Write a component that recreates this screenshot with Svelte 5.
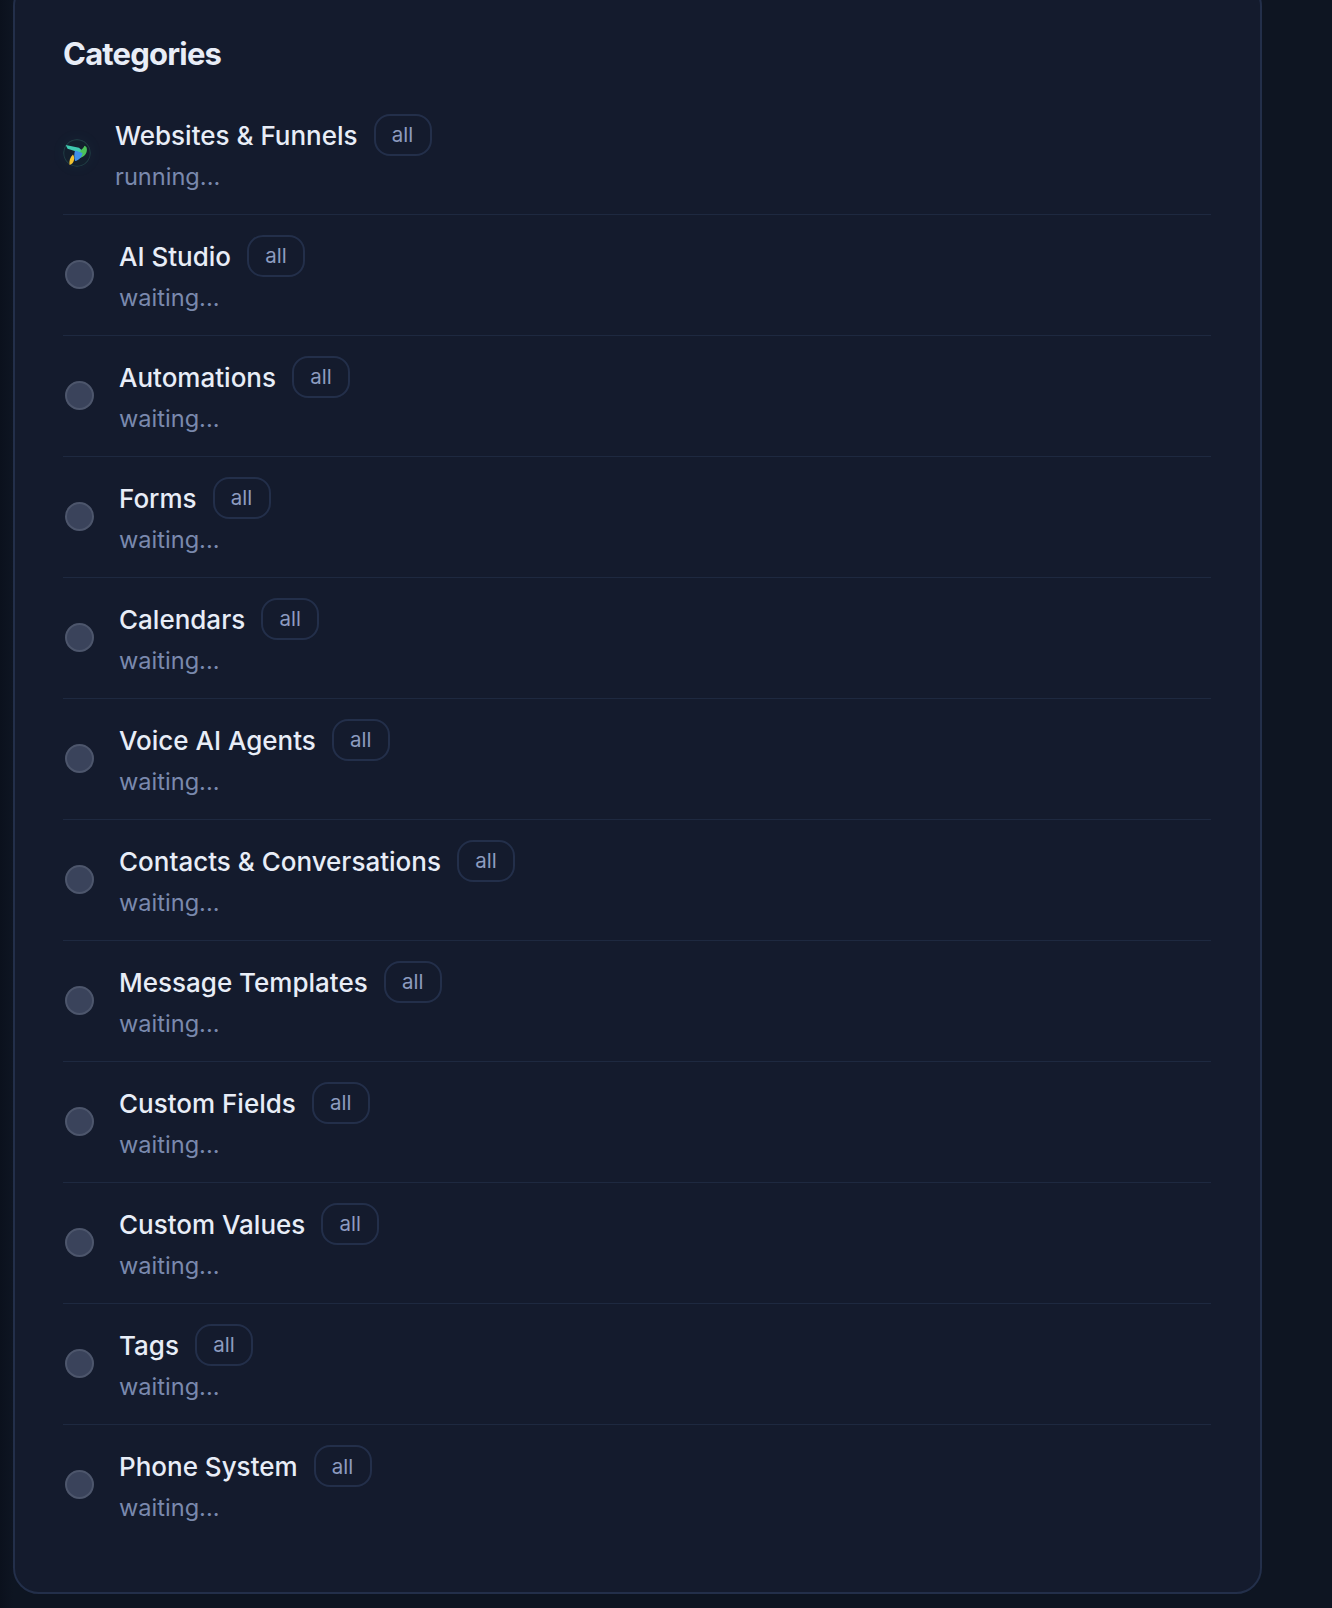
<script>
  const categories = [
    { name: 'Websites & Funnels', status: 'running' },
    { name: 'AI Studio', status: 'waiting' },
    { name: 'Automations', status: 'waiting' },
    { name: 'Forms', status: 'waiting' },
    { name: 'Calendars', status: 'waiting' },
    { name: 'Voice AI Agents', status: 'waiting' },
    { name: 'Contacts & Conversations', status: 'waiting' },
    { name: 'Message Templates', status: 'waiting' },
    { name: 'Custom Fields', status: 'waiting' },
    { name: 'Custom Values', status: 'waiting' },
    { name: 'Tags', status: 'waiting' },
    { name: 'Phone System', status: 'waiting' }
  ];
</script>

<div class="page">
  <section class="panel">
    <h2>Categories</h2>
    <ul class="list">
      {#each categories as cat}
        <li class="row">
          {#if cat.status === 'running'}
            <svg class="spinner" viewBox="0 0 28 28" aria-hidden="true">
              <circle cx="14" cy="14" r="13.3" fill="#131f2d" stroke="#1f3a42" stroke-width="1.2" />
              <path d="M2.7 6 L16 8.8 L18.5 11 L18 14 L4.6 9.8 Z" fill="#3fc9b0" />
              <path d="M21.5 6.8 C23.5 7.2 24.3 9.5 23.8 12 C23.2 15.5 20.5 18.2 17 19 L17.5 11.5 C19 10.5 20.5 9 21.5 6.8 Z" fill="#4cc35a" />
              <path d="M12 11.5 L19.5 14 C19 18 16 21.5 12 22 C11 18 11 15 12 11.5 Z" fill="#3f8fe8" />
              <path d="M10 15.5 C11 17 11.5 19 11 21 C10.5 23.5 9 25.5 6.5 26 C6 22 7 18 10 15.5 Z" fill="#f2c230" />
            </svg>
          {:else}
            <span class="dot"></span>
          {/if}
          <div class="body">
            <div class="title">
              <span class="name">{cat.name}</span>
              <span class="tag">all</span>
            </div>
            <div class="status">{cat.status}...</div>
          </div>
        </li>
      {/each}
    </ul>
  </section>
</div>

<style>
  :global(body) {
    margin: 0;
    background: #0d1421;
    font-family: Inter, "Liberation Sans", sans-serif;
    text-rendering: optimizeLegibility;
    font-kerning: normal;
  }

  .page {
    height: 1608px;
    overflow: hidden;
    padding-left: 13px;
    background: linear-gradient(90deg, #0b111d 0, #0e1522 13px);
  }

  .panel {
    box-sizing: border-box;
    width: 1249px;
    height: 1614px;
    margin-top: -20px;
    padding: 54px 49px 0 48px;
    background: #141b2d;
    border: 2px solid #232f4a;
    border-radius: 26px;
  }

  h2 {
    margin: 0 0 22px;
    font-size: 31px;
    line-height: 36px;
    font-weight: 700;
    letter-spacing: -0.8px;
    color: #e8edf7;
  }

  .list {
    margin: 0;
    padding: 0;
    list-style: none;
  }

  .row {
    display: flex;
    align-items: center;
    height: 121px;
    box-sizing: border-box;
    border-bottom: 1.5px solid #1e2940;
  }

  .row:last-child {
    border-bottom: none;
  }

  .dot {
    box-sizing: border-box;
    flex: none;
    width: 29px;
    height: 29px;
    margin: -2px 25px 0 2px;
    border-radius: 50%;
    background: #3a435b;
    border: 2px solid #4d566c;
  }

  .spinner {
    flex: none;
    width: 28px;
    height: 28px;
    margin: -2px 24px 0 0;
    border-radius: 50%;
    box-shadow: 0 0 16px rgba(70, 200, 180, 0.05);
  }

  .title {
    display: flex;
    align-items: center;
    gap: 16px;
  }

  .name {
    padding-top: 1px;
    font-size: 26px;
    line-height: 41px;
    font-weight: 500;
    color: #e8edf7;
  }

  .tag {
    box-sizing: border-box;
    height: 42px;
    width: 58px;
    display: flex;
    align-items: center;
    justify-content: center;
    border: 2px solid #232f4a;
    border-radius: 16px;
    font-size: 20.5px;
    color: #8d9cc0;
  }

  .status {
    margin-top: 3px;
    font-size: 23.6px;
    line-height: 36px;
    color: #7a89ad;
  }
</style>
